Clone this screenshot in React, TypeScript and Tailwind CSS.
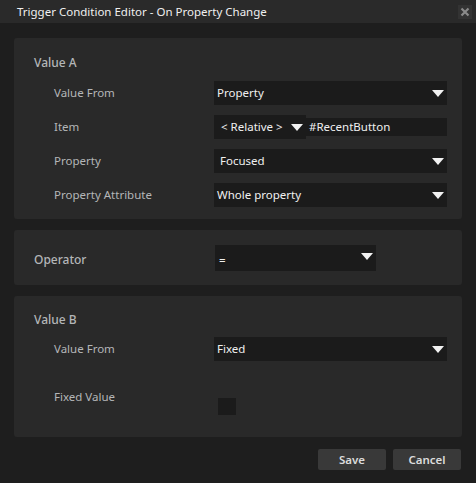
import React from "react";

const font = { fontFamily: '"Noto Sans", "Open Sans", sans-serif' };

function Caret() {
  return (
    <svg width="12" height="7" viewBox="0 0 12 7" className="shrink-0">
      <polygon points="0,0 12,0 6,7" fill="#f2f2f2" />
    </svg>
  );
}

function Dropdown({ value, className = "" }: { value: string; className?: string }) {
  return (
    <div
      className={`flex h-[24px] items-center justify-between bg-[#1b1b1b] pl-[3px] pr-[3px] text-[11.5px] text-[#f0f0f0] ${className}`}
    >
      <span>{value}</span>
      <Caret />
    </div>
  );
}

function Row({ label, children }: { label: string; children: React.ReactNode }) {
  return (
    <div className="flex items-center">
      <div className="w-[180px] pl-[20px] text-[11.5px] text-[#b4b6b8]">{label}</div>
      <div className="w-[233px]">{children}</div>
    </div>
  );
}

export default function App() {
  return (
    <div className="flex h-[483px] w-[476px] flex-col bg-[#1e1e1e]" style={font}>
      <div className="flex h-[23px] items-center justify-between bg-[#2a2a2a] pl-[17px] pr-[4px]">
        <span className="text-[11.5px] text-[#f0f0f0]">Trigger Condition Editor - On Property Change</span>
        <div className="flex h-[14px] w-[14px] items-center justify-center bg-[#333333]">
          <svg width="10" height="10" viewBox="0 0 10 10">
            <path d="M1.5 1.5 L8.5 8.5 M8.5 1.5 L1.5 8.5" stroke="#8a8a8a" strokeWidth="2.2" />
          </svg>
        </div>
      </div>

      <div className="flex flex-col gap-[11px] px-[14px] pt-[15px]">
        <div className="flex h-[181px] flex-col rounded-[3px] bg-[#292929] pl-[20px] pt-[16px]">
          <div className="text-[12px] font-medium text-[#b4b6b8]">Value A</div>
          <div className="mt-[9px] flex flex-col gap-[10px]">
            <Row label="Value From">
              <Dropdown value="Property" />
            </Row>
            <Row label="Item">
              <div className="flex items-center">
                <div className="flex h-[24px] w-[92px] items-center justify-between bg-[#1b1b1b] pl-[7px] pr-[3px] text-[11.5px] text-[#f0f0f0]">
                  <span>&lt; Relative &gt;</span>
                  <Caret />
                </div>
                <div className="flex h-[18px] flex-1 items-center bg-[#1b1b1b] pl-[3px] text-[11.5px] text-[#f0f0f0]">
                  #RecentButton
                </div>
              </div>
            </Row>
            <Row label="Property">
              <Dropdown value="Focused" className="pl-[6px]" />
            </Row>
            <Row label="Property Attribute">
              <Dropdown value="Whole property" />
            </Row>
          </div>
        </div>

        <div className="flex h-[55px] items-start rounded-[3px] bg-[#292929] pl-[20px]">
          <div className="mt-[21px] w-[181px] text-[12px] font-medium text-[#b4b6b8]">Operator</div>
          <div className="mt-[15px] flex h-[26px] w-[161px] items-center justify-between bg-[#1b1b1b] pl-[4px] pr-[3px] text-[11.5px] text-[#f0f0f0]">
            <span className="mt-[3px]">=</span>
            <div className="-mt-[4px]">
              <Caret />
            </div>
          </div>
        </div>

        <div className="flex h-[141px] flex-col rounded-[3px] bg-[#292929] pl-[20px] pt-[15px]">
          <div className="text-[12px] font-medium text-[#b4b6b8]">Value B</div>
          <div className="mt-[8px] flex flex-col">
            <Row label="Value From">
              <Dropdown value="Fixed" />
            </Row>
            <div className="mt-[28px] flex items-start">
              <div className="w-[180px] pl-[20px] text-[11.5px] leading-[16px] text-[#b4b6b8]">Fixed Value</div>
              <div className="ml-[4px] mt-[9px] h-[17px] w-[18px] bg-[#1b1b1b]" />
            </div>
          </div>
        </div>
      </div>

      <div className="mt-[12px] flex justify-end gap-[7px] pr-[15px]">
        <button className="h-[21px] w-[68px] rounded-[2px] bg-[#393939] text-[11.5px] font-semibold text-[#dcdcdc]">
          Save
        </button>
        <button className="h-[21px] w-[68px] rounded-[2px] bg-[#393939] text-[11.5px] font-semibold text-[#dcdcdc]">
          Cancel
        </button>
      </div>
    </div>
  );
}
